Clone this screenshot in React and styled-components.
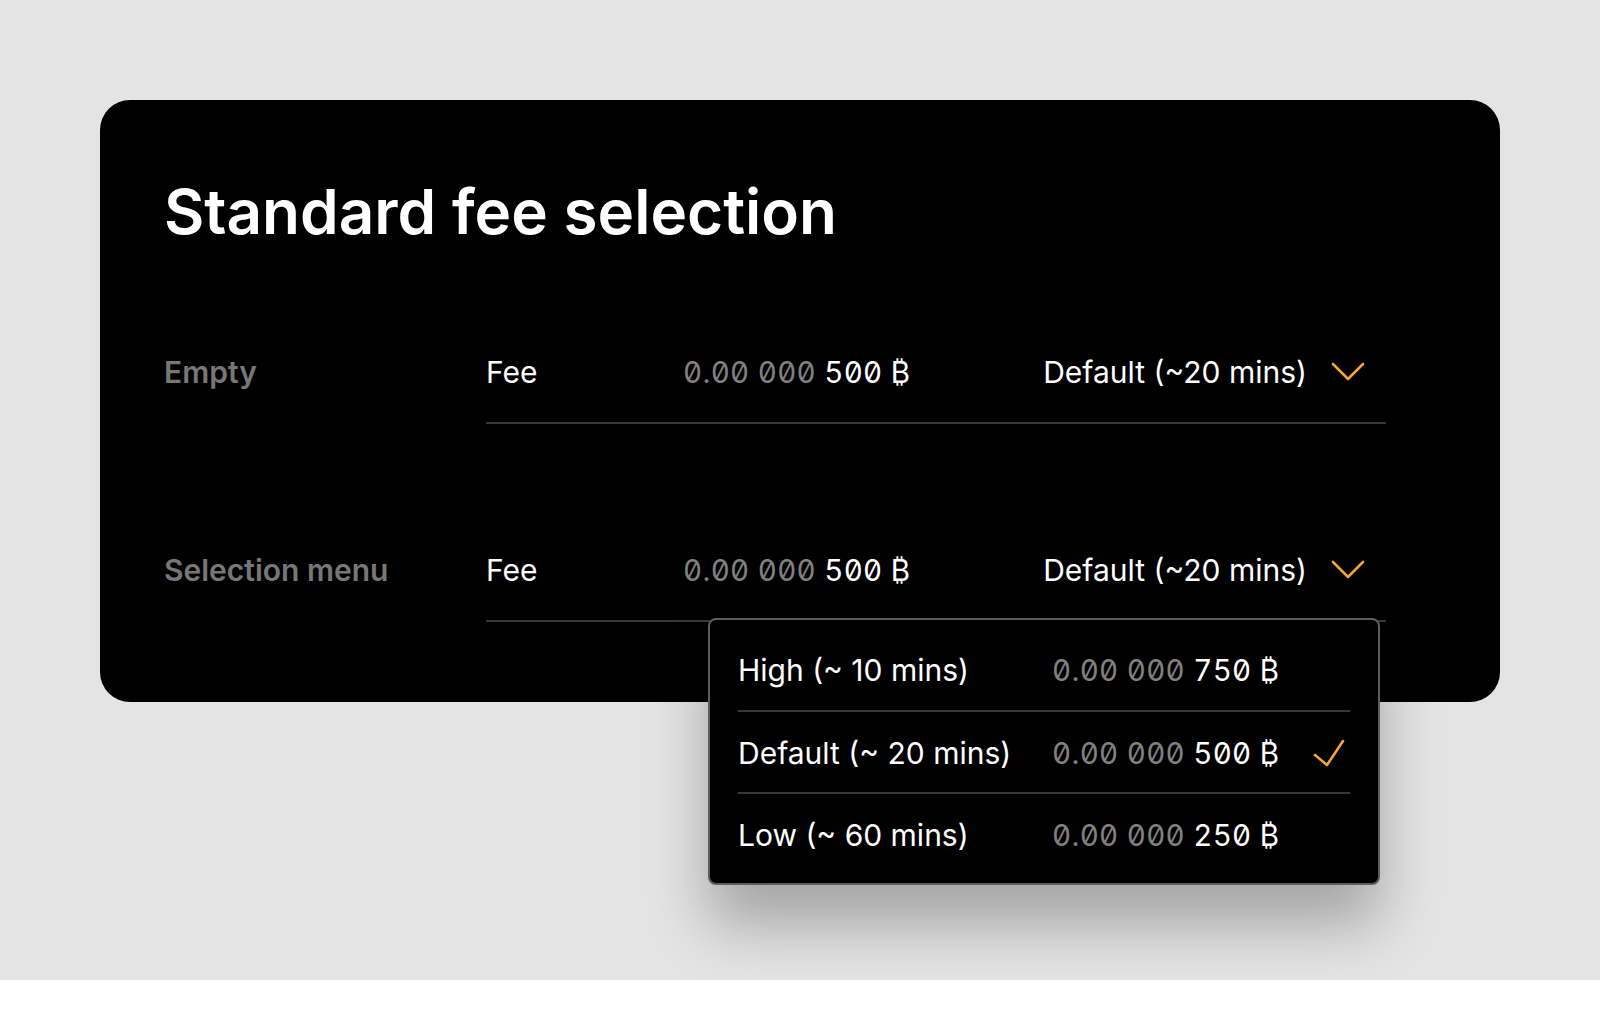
import React from 'react';
import styled, { createGlobalStyle } from 'styled-components';

const GlobalStyle = createGlobalStyle`
  body {
    margin: 0;
    background: #ffffff;
    font-family: Inter, "Noto Sans", "DejaVu Sans", sans-serif;
  }
`;

const Page = styled.div`
  box-sizing: border-box;
  height: 980px;
  padding: 100px;
  background: #e4e4e4;
`;

const Card = styled.section`
  background: #000;
  border-radius: 30px;
  padding: 75px 114px 80px 64px;
`;

const Title = styled.h1`
  margin: 0 0 74px;
  font-size: 62px;
  line-height: 74px;
  font-weight: 600;
  color: #fff;
`;

const Rows = styled.div`
  display: flex;
  flex-direction: column;
  gap: 97px;
`;

const Row = styled.div`
  display: grid;
  grid-template-columns: 322px 900px;
  align-items: center;
`;

const RowLabel = styled.div`
  margin-bottom: 4px;
  font-size: 30px;
  line-height: 40px;
  font-weight: 600;
  color: #777;
`;

const Field = styled.div`
  position: relative;
  display: flex;
  align-items: center;
  height: 101px;
  box-sizing: border-box;
  border-bottom: 2px solid #383838;
  padding-bottom: 2px;
  padding-right: 21px;
  font-size: 30px;
  line-height: 40px;
  color: #fff;
`;

const FeeLabel = styled.span`
  width: 197px;
`;

const Amount = styled.span`
  font-feature-settings: "tnum", "zero";
  font-size: 29.5px;
  letter-spacing: 0.3px;
  color: #fff;
`;

const Muted = styled.span`
  color: #808080;
`;

const Selector = styled.button`
  margin-left: auto;
  display: flex;
  align-items: center;
  gap: 24px;
  padding: 0;
  border: 0;
  background: none;
  font: inherit;
  color: #fff;
`;

const Menu = styled.div`
  position: absolute;
  top: calc(100% - 2px);
  left: 222px;
  z-index: 2;
  width: 672px;
  box-sizing: border-box;
  padding: 8px 28px 9px;
  background: #000;
  border: 2px solid #5c5c5c;
  border-radius: 8px;
  box-shadow: 0 40px 60px rgba(0, 0, 0, 0.28);
`;

const MenuItem = styled.div`
  display: grid;
  grid-template-columns: 314px 1fr auto;
  align-items: center;
  height: 82px;
  box-sizing: border-box;
  padding-top: 2px;
  font-size: 30px;
  line-height: 40px;
  color: #fff;
  & + & {
    border-top: 2px solid #383838;
  }
`;

const CheckSlot = styled.span`
  display: flex;
  width: 32px;
  height: 28px;
  margin-right: 5px;
`;

const Chevron = () => (
  <svg width="34" height="20" viewBox="0 0 34 20" fill="none">
    <path d="M2 2 L17 17 L32 2" stroke="#f5a33b" strokeWidth="2.6" strokeLinecap="round" strokeLinejoin="round" />
  </svg>
);

const Check = () => (
  <svg width="32" height="28" viewBox="0 0 32 28" fill="none">
    <path d="M2 16 L14 26 L30 2" stroke="#f5a33b" strokeWidth="2.6" strokeLinecap="round" strokeLinejoin="round" />
  </svg>
);

const FeeAmount = ({ sats }) => (
  <Amount>
    <Muted>0.00 000</Muted> {sats} ₿
  </Amount>
);

const options = [
  { label: 'High (~ 10 mins)', sats: '750' },
  { label: 'Default (~ 20 mins)', sats: '500', selected: true },
  { label: 'Low (~ 60 mins)', sats: '250' },
];

function FeeField({ open }) {
  return (
    <Field>
      <FeeLabel>Fee</FeeLabel>
      <FeeAmount sats="500" />
      <Selector>
        Default (~20 mins)
        <Chevron />
      </Selector>
      {open && (
        <Menu>
          {options.map((o) => (
            <MenuItem key={o.label}>
              <span>{o.label}</span>
              <FeeAmount sats={o.sats} />
              <CheckSlot>{o.selected && <Check />}</CheckSlot>
            </MenuItem>
          ))}
        </Menu>
      )}
    </Field>
  );
}

export default function App() {
  return (
    <>
      <GlobalStyle />
      <Page>
        <Card>
          <Title>Standard fee selection</Title>
          <Rows>
            <Row>
              <RowLabel>Empty</RowLabel>
              <FeeField />
            </Row>
            <Row>
              <RowLabel>Selection menu</RowLabel>
              <FeeField open />
            </Row>
          </Rows>
        </Card>
      </Page>
    </>
  );
}
